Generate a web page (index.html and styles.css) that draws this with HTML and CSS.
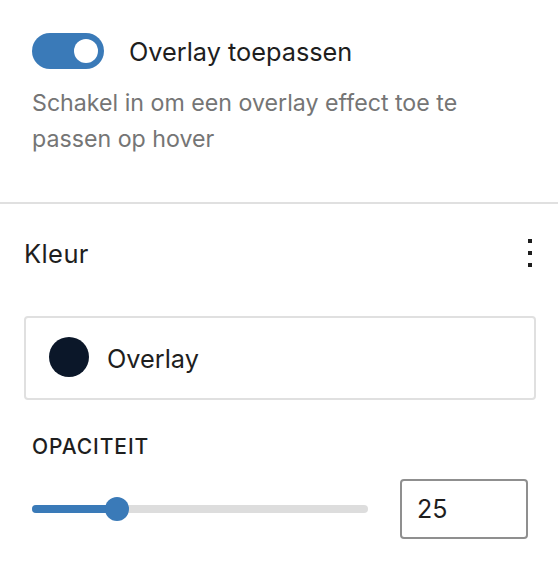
FILE: index.html
```html
<!DOCTYPE html>
<html lang="nl">
<head>
    <meta charset="UTF-8">
    <meta name="viewport" content="width=device-width, initial-scale=1.0">
    <title>Overlay instellingen</title>
    <link rel="stylesheet" href="styles.css">
</head>
<body>
    <div class="panel panel-toggle">
        <div class="toggle-row">
            <span class="toggle is-on"><span class="toggle-thumb"></span></span>
            <span class="toggle-label">Overlay toepassen</span>
        </div>
        <p class="help">Schakel in om een overlay effect toe te passen op hover</p>
    </div>

    <div class="panel panel-color">
        <div class="panel-header">
            <span class="panel-title">Kleur</span>
            <svg class="more-icon" width="4" height="28" viewBox="0 0 4 28">
                <rect x="0" y="0" width="4" height="4"/>
                <rect x="0" y="12" width="4" height="4"/>
                <rect x="0" y="24" width="4" height="4"/>
            </svg>
        </div>

        <div class="color-item">
            <span class="swatch"></span>
            <span class="color-name">Overlay</span>
        </div>

        <div class="range">
            <div class="range-label">OPACITEIT</div>
            <div class="range-row">
                <div class="track">
                    <div class="track-fill" style="width: 85px"></div>
                    <div class="thumb" style="left: 85px"></div>
                </div>
                <input type="text" class="range-input" value="25">
            </div>
        </div>
    </div>
</body>
</html>
```

FILE: styles.css
```css
body {
    margin: 0;
    background-color: #fff;
    color: #1e1e1e;
    font-family: Inter, "Noto Sans", Arial, sans-serif;
}
.panel-toggle {
    padding: 33px 32px 45px 32px;
    border-bottom: 2px solid #e0e0e0;
}
.toggle-row {
    display: flex;
    align-items: center;
    gap: 25px;
}
.toggle {
    position: relative;
    width: 72px;
    height: 36px;
    border-radius: 18px;
    background-color: #3a7ab8;
    flex-shrink: 0;
}
.toggle-thumb {
    position: absolute;
    top: 6px;
    right: 6px;
    width: 24px;
    height: 24px;
    border-radius: 50%;
    background-color: #fff;
}
.toggle-label {
    font-size: 25.3px;
}
.help {
    margin: 16px 0 0 0;
    font-size: 23.2px;
    line-height: 36px;
    color: #757575;
}
.panel-color {
    padding: 25px 22px 0 24px;
}
.panel-header {
    display: flex;
    align-items: center;
    justify-content: space-between;
    height: 48px;
}
.panel-title {
    font-size: 25.5px;
    letter-spacing: 0.4px;
}
.more-icon {
    fill: #1e1e1e;
    margin-right: 4px;
}
.color-item {
    margin-top: 39px;
    height: 80px;
    border: 2px solid #e0e0e0;
    border-radius: 4px;
    display: flex;
    align-items: center;
    padding-left: 23px;
    gap: 18px;
}
.swatch {
    width: 40px;
    height: 40px;
    border-radius: 50%;
    background-color: #0b1729;
    margin-top: -2px;
}
.color-name {
    font-size: 25.3px;
}
.range {
    margin-top: 31px;
    padding-left: 8px;
}
.range-label {
    font-size: 21px;
    font-weight: 500;
    line-height: 32px;
    letter-spacing: 0.9px;
}
.range-row {
    margin-top: 16px;
    display: flex;
    align-items: center;
    gap: 32px;
}
.track {
    position: relative;
    width: 336px;
    height: 8px;
    border-radius: 4px;
    background-color: #ddd;
}
.track-fill {
    height: 8px;
    border-radius: 4px;
    background-color: #3a7ab8;
}
.thumb {
    position: absolute;
    top: -8px;
    margin-left: -12px;
    width: 24px;
    height: 24px;
    border-radius: 50%;
    background-color: #3a7ab8;
}
.range-input {
    width: 128px;
    height: 60px;
    box-sizing: border-box;
    border: 2px solid #8f8f8f;
    border-radius: 4px;
    padding: 0 15px;
    font-family: inherit;
    font-size: 25px;
    color: #1e1e1e;
    outline: none;
}
```
